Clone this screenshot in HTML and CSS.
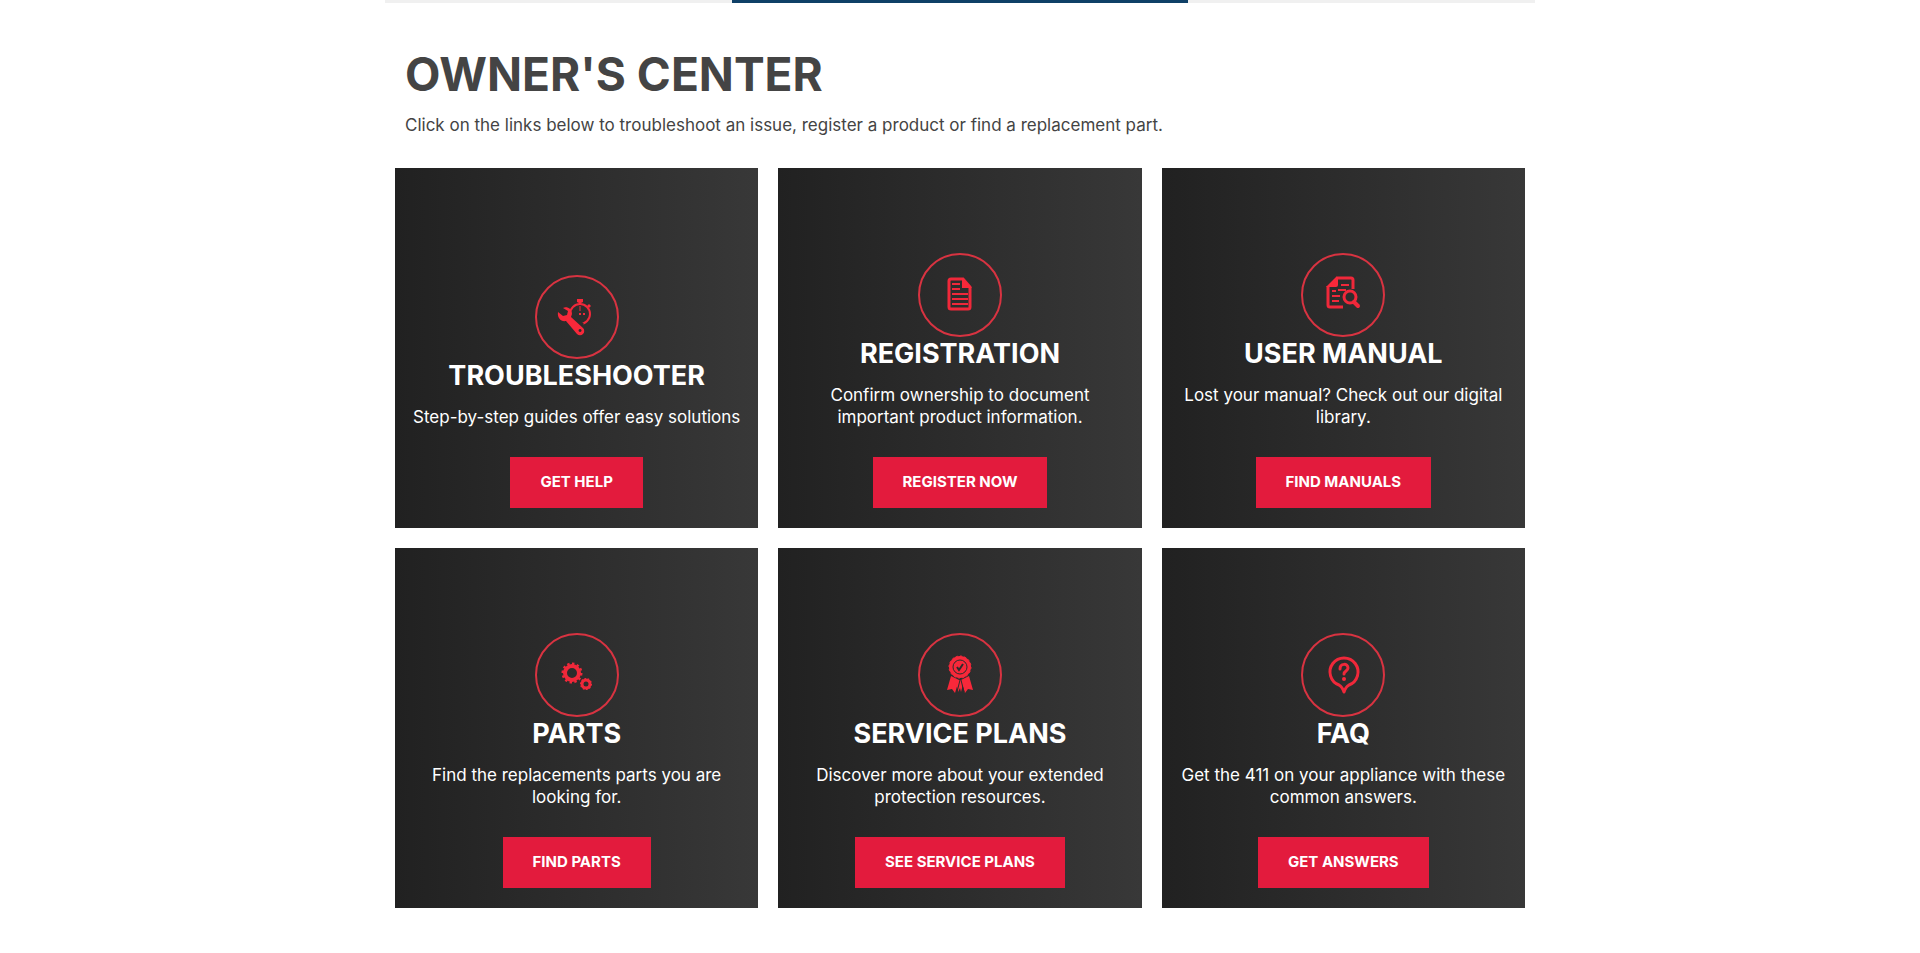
FILE: index.html
```html
<!DOCTYPE html>
<html lang="en">
<head>
    <meta charset="UTF-8">
    <meta name="viewport" content="width=device-width, initial-scale=1.0">
    <title>Owner's Center</title>
    <link rel="stylesheet" href="styles.css">
</head>
<body>
    <main class="container">
        <div class="tab-line">
            <span class="tab-line-active"></span>
        </div>

        <header class="intro">
            <h1>OWNER'S CENTER</h1>
            <p>Click on the links below to troubleshoot an issue, register a product or find a replacement part.</p>
        </header>

        <section class="cards">
            <article class="card">
                <svg class="icon" viewBox="0 0 84 84" aria-hidden="true">
                    <circle class="ring" cx="42" cy="42" r="41"/>
                    <circle class="line" cx="45" cy="39" r="10" stroke-width="2"/>
                    <path class="fill" d="M42 24h6v3l-2 1v2h-2v-2l-2-1zM52 31l2-2 2 2-2 2z"/>
                    <path class="line" stroke-width="1" d="M45 31v5"/>
                    <path class="line" stroke-width="2" stroke-dasharray="2 2" d="M44 39h7"/>
                    <path class="cut" d="M37 37L49 49 44 53 33 43z"/>
                    <path class="fill" fill-rule="evenodd" d="M28 33c4-2 9 1 9 6l-1 3 12 11a4 4 0 0 1-6 6L31 46c-5 1-9-3-8-9l5 4 4-1 1-4z M45 54a1.500 1.500 0 1 0 .1 0z"/>
                </svg>
                <h2>TROUBLESHOOTER</h2>
                <p>Step-by-step guides offer easy solutions</p>
                <a class="btn" href="#">GET HELP</a>
            </article>

            <article class="card">
                <svg class="icon" viewBox="0 0 84 84" aria-hidden="true">
                    <circle class="ring" cx="42" cy="42" r="41"/>
                    <path class="line" stroke-width="3" d="M33 26h12l7 8v20a2 2 0 0 1-2 2H33a2 2 0 0 1-2-2V28a2 2 0 0 1 2-2z"/>
                    <path class="fill" d="M44 25l10 10H44z"/>
                    <path class="line" stroke-width="2" d="M34 31h8M34 36h8M34 41h16M34 46h16M34 51h16"/>
                </svg>
                <h2>REGISTRATION</h2>
                <p>Confirm ownership to document important product information.</p>
                <a class="btn" href="#">REGISTER NOW</a>
            </article>

            <article class="card">
                <svg class="icon" viewBox="0 0 84 84" aria-hidden="true">
                    <circle class="ring" cx="42" cy="42" r="41"/>
                    <path class="line" stroke-width="3" d="M27 33v19a2 2 0 0 0 2 2h13M35 25h15a2 2 0 0 1 2 2v9"/>
                    <path class="fill" d="M25 34l10-10h2v8a2 2 0 0 1-2 2z"/>
                    <path class="line" stroke-width="2" d="M40 32h8M37 37h8M31 38h4M31 43h8M31 48h7"/>
                    <circle class="line" cx="49" cy="44" r="6" stroke-width="3"/>
                    <path class="line" stroke-width="4" stroke-linecap="round" d="M53 49l4 4"/>
                </svg>
                <h2>USER MANUAL</h2>
                <p>Lost your manual? Check out our digital library.</p>
                <a class="btn" href="#">FIND MANUALS</a>
            </article>

            <article class="card">
                <svg class="icon" viewBox="0 0 84 84" aria-hidden="true">
                    <circle class="ring" cx="42" cy="42" r="41"/>
                    <circle class="line" cx="37" cy="40" r="7" stroke-width="4"/>
                    <circle class="line" cx="37" cy="40" r="9" stroke-width="3" pathLength="48" stroke-dasharray="2 2"/>
                    <circle class="line" cx="51" cy="51" r="4" stroke-width="3"/>
                    <circle class="line" cx="51" cy="51" r="5" stroke-width="2" pathLength="40" stroke-dasharray="2 2"/>
                </svg>
                <h2>PARTS</h2>
                <p>Find the replacements parts you are looking for.</p>
                <a class="btn" href="#">FIND PARTS</a>
            </article>

            <article class="card">
                <svg class="icon" viewBox="0 0 84 84" aria-hidden="true">
                    <circle class="ring" cx="42" cy="42" r="41"/>
                    <path class="fill" d="M33 43l8 4-4 13-3-4-5 1zM51 43l-8 4 4 13 3-4 5 1z"/>
                    <path class="fill" d="M38 47h8l-3 12-1-4-2 4z"/>
                    <path class="cut-line" d="M42 47l-3 12M43 47l3 12"/>
                    <circle class="fill" cx="42" cy="34" r="11"/>
                    <circle class="line" cx="42" cy="34" r="11" stroke-width="1" pathLength="64" stroke-dasharray="2 2"/>
                    <circle class="cut-line" cx="42" cy="34" r="7"/>
                    <path class="cut-line check" d="M39 34l2 3 4-6"/>
                </svg>
                <h2>SERVICE PLANS</h2>
                <p>Discover more about your extended protection resources.</p>
                <a class="btn" href="#">SEE SERVICE PLANS</a>
            </article>

            <article class="card">
                <svg class="icon" viewBox="0 0 84 84" aria-hidden="true">
                    <circle class="ring" cx="42" cy="42" r="41"/>
                    <path class="line" stroke-width="3" stroke-linejoin="round" d="M38 52a14 14 0 1 1 10 0c-2 1-4 4-5 7-1-3-3-6-5-7z"/>
                    <path class="line" stroke-width="3" stroke-linecap="round" d="M39 36c0-6 8-6 8-1 0 3-4 3-4 6"/>
                    <circle class="fill" cx="43" cy="46" r="2"/>
                </svg>
                <h2>FAQ</h2>
                <p>Get the 411 on your appliance with these common answers.</p>
                <a class="btn" href="#">GET ANSWERS</a>
            </article>
        </section>
    </main>
</body>
</html>
```
FILE: styles.css
```css
* {
    box-sizing: border-box;
    margin: 0;
    padding: 0;
}

body {
    font-family: Inter, "Open Sans", sans-serif;
    font-size: 17px;
    line-height: 22px;
    color: #444;
    background-color: #fff;
}

.container {
    width: 100%;
    max-width: 1150px;
    margin: 0 auto;
}

.tab-line {
    display: flex;
    justify-content: center;
    height: 3px;
    background-color: #f0f0f0;
}

.tab-line-active {
    width: 40%;
    max-width: 456px;
    background-color: #0f4067;
}

.intro {
    padding: 43px 20px 32px;
}

.intro h1 {
    font-size: 46px;
    line-height: 56px;
    margin-bottom: 12px;
}

.cards {
    display: grid;
    grid-template-columns: repeat(3, 1fr);
    gap: 20px;
    padding: 0 10px 20px;
}

.card {
    display: flex;
    flex-direction: column;
    align-items: center;
    justify-content: flex-end;
    min-height: 360px;
    padding: 20px 15px;
    text-align: center;
    color: #fff;
    background: linear-gradient(to right, #212121, #383838);
}

.card h2 {
    font-size: 27px;
    line-height: 34px;
    margin-bottom: 13px;
}

.card p {
    margin-bottom: 29px;
}

.icon {
    width: 84px;
    height: 84px;
}

.ring {
    fill: none;
    stroke: #d83341;
    stroke-width: 2;
}

.line {
    fill: none;
    stroke: #f0283a;
}

.fill {
    fill: #f8283a;
}

.cut {
    fill: #2c2c2c;
}

.cut-line {
    fill: none;
    stroke: #2c2c2c;
    stroke-width: 1;
}

.check {
    stroke-width: 2;
}

.btn {
    padding: 14px 30px 15px;
    font-size: 15px;
    font-weight: 700;
    color: #fff;
    text-decoration: none;
    background-color: #e31b3d;
}

.btn:hover {
    background-color: #c01432;
}

@media (max-width: 800px) {
    .cards {
        grid-template-columns: 1fr;
    }
}
```
